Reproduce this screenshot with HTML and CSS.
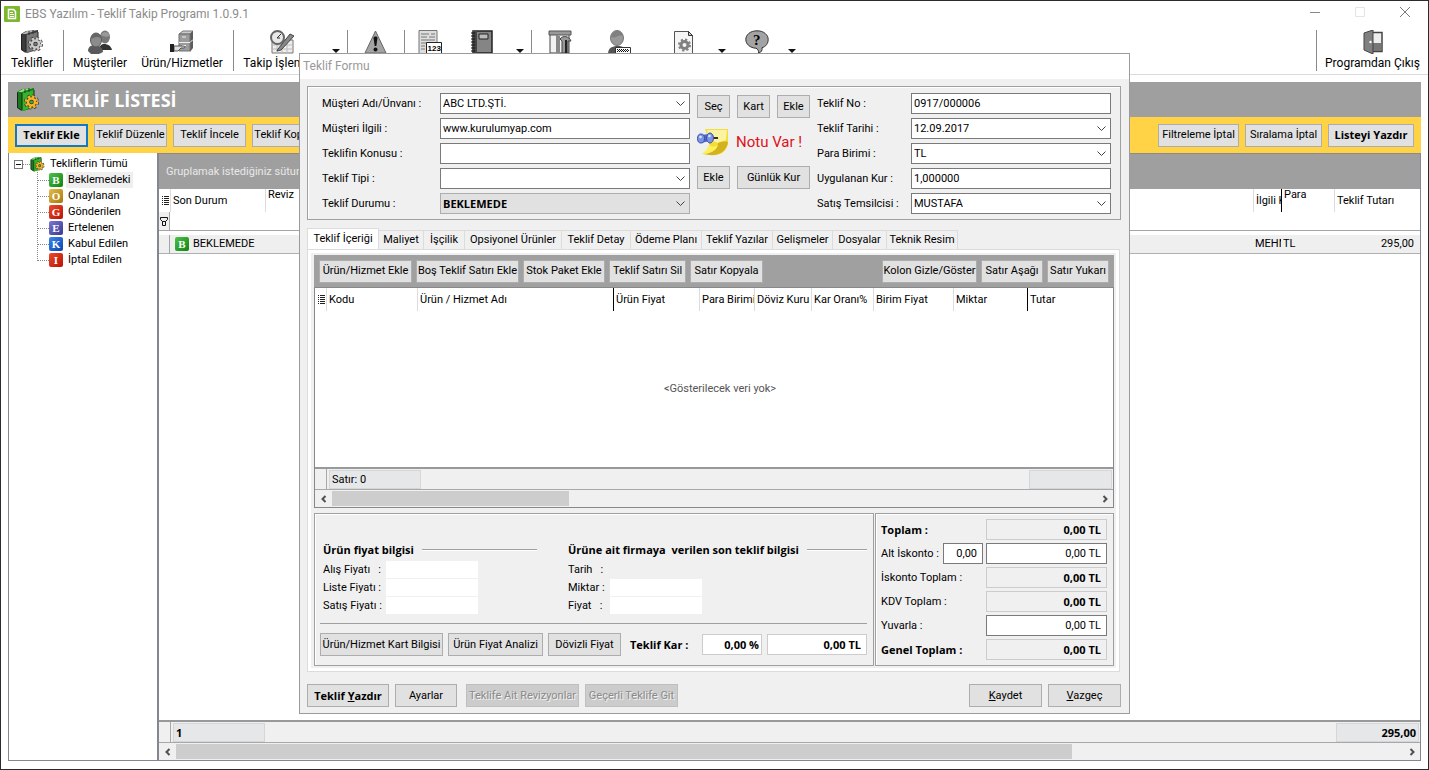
FILE: index.html
```html
<!DOCTYPE html>
<html lang="tr">
<head>
  <meta charset="UTF-8">
  <meta name="viewport" content="width=device-width, initial-scale=1.0">
  <title>EBS Yazılım - Teklif Takip Programı 1.0.9.1</title>
  <link rel="stylesheet" href="styles.css">
</head>
<body>

<!-- shared icons -->
<svg class="sprite" aria-hidden="true">
  <symbol id="i-book" viewBox="0 0 24 24">
    <path d="M1 4 6 1l12-1v3l-1 17-10 3-6-3z" fill="var(--book-dark)"/>
    <path d="M6 5l12-3v17L6 23z" fill="var(--book)"/>
    <path d="M2 4l5-3 10-1-11 4z" fill="var(--book-light)"/>
    <path d="M1.500 4.500v15l4 3M6 5v17M18 2v5" fill="none" stroke="#222"/>
    <path d="M9 1v4M13 0v4" stroke="#333"/>
    <circle cx="15.500" cy="14" r="5.500" fill="none" stroke="#333" stroke-width="4" stroke-dasharray="2.300 2"/>
    <circle cx="15.500" cy="14" r="3.500" fill="none" stroke="#333" stroke-width="4"/>
    <circle cx="15.500" cy="14" r="5.500" fill="none" stroke="var(--cog)" stroke-width="2.500" stroke-dasharray="2.300 2"/>
    <circle cx="15.500" cy="14" r="3.500" fill="none" stroke="var(--cog)" stroke-width="2.500"/>
  </symbol>
  <symbol id="i-arrow-left" viewBox="0 0 8 8">
    <path d="M5.500 1 2.500 4l3 3" fill="none" stroke="#505050" stroke-width="2"/>
  </symbol>
  <symbol id="i-arrow-right" viewBox="0 0 8 8">
    <path d="M2.500 1l3 3-3 3" fill="none" stroke="#505050" stroke-width="2"/>
  </symbol>
  <symbol id="i-lines" viewBox="0 0 7 9">
    <path d="M0 .5h1M2 .5h5M0 2.500h1M2 2.500h5M0 4.500h1M2 4.500h5M0 6.500h1M2 6.500h5M0 8.500h1M2 8.500h5" stroke="#222"/>
  </symbol>
</svg>

<div class="window">
  <header class="titlebar">
    <svg class="app-icon" viewBox="0 0 16 16"><rect width="16" height="16" rx="1" fill="#7cb82f"/><path d="M4.500 3.500h5l2 2v7h-7z" fill="none" stroke="#fff" stroke-width="1.500"/><path d="M6 6.500h3M6 8.500h4M6 10.500h4" stroke="#fff"/></svg>
    <h1>EBS Yazılım - Teklif Takip Programı 1.0.9.1</h1>
    <div class="window-buttons">
      <button aria-label="Simge durumuna küçült"><svg viewBox="0 0 12 12"><path d="M1 6.500h10" stroke="#888"/></svg></button>
      <button aria-label="Ekranı kapla"><svg viewBox="0 0 12 12"><path d="M1.500 1.500h9v9h-9z" fill="none" stroke="#e4e4e4"/></svg></button>
      <button aria-label="Kapat"><svg viewBox="0 0 12 12"><path d="M1 1l10 10M11 1 1 11" stroke="#777"/></svg></button>
    </div>
  </header>

  <nav class="toolbar">
    <button class="tool tool-62"><svg class="icon book-gray"><use href="#i-book"/></svg>Teklifler</button>
    <span class="sep"></span>
    <button class="tool tool-72">
      <svg class="icon" viewBox="0 0 24 24"><path d="M11 19c0-3 3-5 5-5 4 0 7 2 8 6H12z" fill="#333"/><ellipse cx="17" cy="7" rx="5" ry="6.500" fill="#777"/><path d="M13 5c2-4 7-4 9 1-3 1-6 1-9-1z" fill="#999"/><path d="M0 21c0-4 3-6 7-6s8 3 8 7l-4 2H3z" fill="#5a5a5a"/><ellipse cx="8" cy="10" rx="5.500" ry="7" fill="#8c8c8c" stroke="#5b5b5b"/><path d="M3 9c1-8 10-7 11 0-4-3-7-2-11 0z" fill="#666"/></svg>
      Müşteriler
    </button>
    <button class="tool tool-92">
      <svg class="icon" viewBox="0 0 24 24"><path d="M9 4l4-3h10l-3 3z" fill="#ccc" stroke="#777"/><path d="M20 4l3-3v17l-3 4z" fill="#5c5c5c"/><path d="M9 4h11v17H9z" fill="#9b9b9b" stroke="#707070"/><path d="M9 12.500h11l3-3M12 7h4M12 15.500h4" fill="none" stroke="#eee"/><path d="M4 16h8c3 0 4 1 2 2h-3l-3 3H4z" fill="#ddd" stroke="#555"/><path d="M0 14h4v8H0z" fill="#222"/></svg>
      Ürün/Hizmetler
    </button>
    <span class="sep sep-gap"></span>
    <button class="tool tool-96">
      <svg class="icon" viewBox="0 0 24 24"><path d="M2 10h21v13H2z" fill="#eee" stroke="#777"/><path d="M3 15h20M3 19h20M7 12v11M12 12v11M17 12v11" stroke="#bbb"/><circle cx="7.500" cy="7.500" r="6.500" fill="#e8e8e8" stroke="#666" stroke-width="2"/><path d="M11 4 7 8h3" fill="none" stroke="#333"/><path d="M8 19 20 4l4 2-13 14-4 1z" fill="#888" stroke="#444"/></svg>
      Takip İşlemleri
    </button>
    <button class="drop" aria-label="Takip menüsü"></button>
    <span class="sep sep-gap"></span>
    <button class="tool tool-56" aria-label="Uyarılar">
      <svg class="icon" viewBox="0 0 24 24"><path d="M11.500 1 22 23H1z" fill="#a3a3a3" stroke="#666"/><path d="M9.500 8c0-2 4-2 4 0l-1.200 8h-1.600z" fill="#111"/><circle cx="11.500" cy="19.500" r="2" fill="#111"/></svg>
    </button>
    <span class="sep"></span>
    <button class="tool tool-50" aria-label="Numaratör">
      <svg class="icon" viewBox="0 0 24 24"><path d="M1 .5h18v23H1z" fill="#ddd" stroke="#777"/><path d="M3 4h8M13 4h4M3 7h6M11 7h6M3 10h14M3 13h5M3 16h4M3 19h4" stroke="#777"/><path d="M8.500 12.500h15v11h-15z" fill="#fff" stroke="#222"/><text x="9.500" y="21" font-size="8" font-weight="bold" font-family="Liberation Sans, sans-serif">123</text></svg>
    </button>
    <button class="tool tool-54" aria-label="Rehber">
      <svg class="icon" viewBox="0 0 24 24"><path d="M3 1h19v22H3z" fill="#858585" stroke="#222" stroke-width="1.500"/><path d="M3 1h4v22H3z" fill="#444"/><path d="M1 3h4M1 6h4M1 9h4M1 12h4M1 15h4M1 18h4M1 21h4" stroke="#111"/><path d="M9 4h9v5H9z" fill="#bbb" stroke="#222"/></svg>
    </button>
    <button class="drop drop-gap" aria-label="Rehber menüsü"></button>
    <span class="sep sep-gap"></span>
    <button class="tool tool-56" aria-label="Araçlar">
      <svg class="icon" viewBox="0 0 24 24"><path d="M2 4h19v19H2z" fill="#f2f2f2" stroke="#444"/><path d="M1 1h22v4H1z" fill="#999" stroke="#555"/><path d="M9 5v18M11 6v17" stroke="#888" stroke-width="2"/><path d="M12 9c3-4 9-3 11 2h-3v12h-6V11z" fill="#999" stroke="#444"/><path d="M18 10v13" stroke="#222" stroke-width="2"/></svg>
    </button>
    <button class="tool tool-62" aria-label="Kullanıcılar">
      <svg class="icon" viewBox="0 0 24 24"><path d="M1 24c0-6 4-8 10-8 5 0 9 2 9 8z" fill="#555"/><ellipse cx="10" cy="8" rx="6.500" ry="7.500" fill="#999" stroke="#777"/><path d="M4 7c2-8 11-8 12-1-5-2-7 3-12 1z" fill="#808080"/><path d="M8.500 17.500h15v6h-15z" fill="#fff" stroke="#333"/><path d="M10 19.500h12M11 20.500h12M10 21.500h12" stroke="#111" stroke-dasharray="1 1"/></svg>
    </button>
    <button class="tool tool-66" aria-label="Ayar dosyası">
      <svg class="icon" viewBox="0 0 24 24"><path d="M3.500 1.500h14l4 4v18h-18z" fill="#f5f5f5" stroke="#555"/><path d="M17.500 1.500v4h4z" fill="#ccc" stroke="#333"/><circle cx="13.500" cy="15" r="3.500" fill="none" stroke="#808080" stroke-width="3"/><circle cx="13.500" cy="15" r="5.500" fill="none" stroke="#808080" stroke-width="2" stroke-dasharray="2.200 2.100"/></svg>
    </button>
    <button class="drop" aria-label="Ayar menüsü"></button>
    <button class="tool tool-58" aria-label="Yardım">
      <svg class="icon" viewBox="0 0 24 24"><path d="M12 .8C5 .8.800 5 .8 9.500S5 18 11 18.200c2 1 3 3 2.500 5 3-1 4-3 3.500-5.500 4-1 6.200-4.500 6.200-8.200C23.200 5 19 .8 12 .8z" fill="#a3a3a3" stroke="#333"/><text x="8" y="15" font-size="15" font-weight="bold" font-family="Liberation Serif, serif">?</text></svg>
    </button>
    <button class="drop" aria-label="Yardım menüsü"></button>
    <span class="sep sep-end"></span>
    <button class="tool tool-exit">
      <svg class="icon" viewBox="0 0 24 24"><path d="M10 2.500h11v19H10z" fill="#eee" stroke="#444" stroke-width="1.500"/><path d="M11 13h9v8h-9z" fill="#777"/><path d="M3 3l9-3v24l-9-4z" fill="#808080" stroke="#444"/><circle cx="9.500" cy="12" r="1.200" fill="#fff"/></svg>
      Programdan Çıkış
    </button>
  </nav>

  <main class="workspace">
    <div class="page-head">
      <svg class="icon book-green"><use href="#i-book"/></svg>
      <h2>TEKLİF LİSTESİ</h2>
    </div>

    <div class="action-bar">
      <button class="btn btn-default">Teklif Ekle</button>
      <button class="btn">Teklif Düzenle</button>
      <button class="btn">Teklif İncele</button>
      <button class="btn">Teklif Kopyala</button>
      <button class="btn push">Filtreleme İptal</button>
      <button class="btn w-76">Sıralama İptal</button>
      <button class="btn strong">Listeyi Yazdır</button>
    </div>

    <div class="split">
      <aside class="tree">
        <div class="tree-root">
          <button class="expander" aria-label="Daralt"></button>
          <span class="dots"></span>
          <svg class="icon-sm book-green"><use href="#i-book"/></svg>
          <a href="#">Tekliflerin Tümü</a>
        </div>
        <ul>
          <li><span class="badge green">B</span><a href="#" class="selected">Beklemedeki</a></li>
          <li><span class="badge gold">O</span><a href="#">Onaylanan</a></li>
          <li><span class="badge red">G</span><a href="#">Gönderilen</a></li>
          <li><span class="badge violet">E</span><a href="#">Ertelenen</a></li>
          <li><span class="badge blue">K</span><a href="#">Kabul Edilen</a></li>
          <li><span class="badge red">I</span><a href="#">İptal Edilen</a></li>
        </ul>
      </aside>

      <section class="list">
        <div class="group-box">Gruplamak istediğiniz sütunu</div>
        <table class="offers">
          <colgroup><col class="c-mark"><col class="c-state"><col><col class="c-contact"><col class="c-cur"><col class="c-total"></colgroup>
          <thead>
            <tr>
              <th><svg class="mark"><use href="#i-lines"/></svg></th>
              <th>Son Durum</th>
              <th class="top">Reviz</th>
              <th>İlgili K</th>
              <th class="top fixed">Para</th>
              <th>Teklif Tutarı</th>
            </tr>
          </thead>
          <tbody>
            <tr class="filter">
              <td><svg class="funnel" viewBox="0 0 8 9"><path d="M.5.5h7v2l-2 2h-3l-2-2zM2.500 4.500h3v4h-3z" fill="none" stroke="#111"/></svg></td>
              <td></td><td></td><td></td><td class="fixed"></td><td></td>
            </tr>
            <tr class="spacer"><td colspan="6"></td></tr>
            <tr class="offer">
              <td></td>
              <td><span class="badge green">B</span>BEKLEMEDE</td>
              <td></td>
              <td>MEHM</td>
              <td class="fixed">TL</td>
              <td class="num">295,00</td>
            </tr>
          </tbody>
        </table>
        <div class="summary">
          <span class="summary-mark"></span>
          <span class="summary-cell strong">1</span>
          <span class="summary-cell strong end sum-total">295,00</span>
        </div>
        <div class="scrollbar">
          <button aria-label="Sola kaydır"><svg><use href="#i-arrow-left"/></svg></button>
          <span class="track"><span class="thumb thumb-list"></span></span>
          <button aria-label="Sağa kaydır"><svg><use href="#i-arrow-right"/></svg></button>
        </div>
      </section>
    </div>
  </main>

  <div class="dialog" role="dialog" aria-labelledby="dialog-title">
    <h2 class="dialog-title" id="dialog-title">Teklif Formu</h2>

    <div class="dialog-body">
      <div class="panel offer-form">
        <div class="fields">
          <label for="customer">Müşteri Adı/Ünvanı :</label>
          <select id="customer"><option>ABC LTD.ŞTİ.</option></select>
          <label for="contact">Müşteri İlgili :</label>
          <input type="text" id="contact" value="www.kurulumyap.com">
          <label for="subject">Teklifin Konusu :</label>
          <input type="text" id="subject">
          <label for="type">Teklif Tipi :</label>
          <select id="type"><option></option></select>
          <label for="state">Teklif Durumu :</label>
          <select id="state" class="state strong"><option>BEKLEMEDE</option></select>
        </div>

        <div class="side-actions">
          <button class="btn">Seç</button>
          <button class="btn">Kart</button>
          <button class="btn">Ekle</button>
          <div class="note">
            <svg viewBox="0 0 32 28"><path d="M8 1h23v13c0 8-7 14-15 13l-11-1c6-3 8-9 7-14z" fill="#f3dd3a"/><path d="M10 2h20l-1 10-8 3-9-4z" fill="#fbf3a0"/><path d="M31 14c-4-1-8 0-10 1 0 5-5 10-14 11 14 4 23-3 24-12z" fill="#d3b31d"/><path d="M4 26c4-2 7-5 8-10 1 3 5 4 9 1-2 6-8 9-17 9z" fill="#ffef5d"/><path d="M14 10h7" stroke="#334" stroke-width="2"/><path d="M4 7l8-1 3 3-2 4-9 2z" fill="#5069c8"/><ellipse cx="4" cy="10.500" rx="3.500" ry="4.500" fill="#7b94e4" stroke="#3b4da8"/><ellipse cx="13" cy="10" rx="3.500" ry="5" fill="#7b94e4" stroke="#3b4da8"/><circle cx="3.500" cy="9" r="1.300" fill="#dfe6ff"/><circle cx="12.500" cy="8" r="1.300" fill="#dfe6ff"/></svg>
            Notu Var !
          </div>
          <button class="btn">Ekle</button>
          <button class="btn wide">Günlük Kur</button>
        </div>

        <div class="fields fields-right">
          <label for="no">Teklif No :</label>
          <input type="text" id="no" value="0917/000006">
          <label for="date">Teklif Tarihi :</label>
          <select id="date"><option>12.09.2017</option></select>
          <label for="currency">Para Birimi :</label>
          <select id="currency"><option>TL</option></select>
          <label for="rate">Uygulanan Kur :</label>
          <input type="text" id="rate" value="1,000000">
          <label for="agent">Satış Temsilcisi :</label>
          <select id="agent"><option>MUSTAFA</option></select>
        </div>
      </div>

      <div class="tabs" role="tablist">
        <button class="tab active" role="tab">Teklif İçeriği</button>
        <button class="tab" role="tab">Maliyet</button>
        <button class="tab" role="tab">İşçilik</button>
        <button class="tab" role="tab">Opsiyonel Ürünler</button>
        <button class="tab" role="tab">Teklif Detay</button>
        <button class="tab" role="tab">Ödeme Planı</button>
        <button class="tab" role="tab">Teklif Yazılar</button>
        <button class="tab" role="tab">Gelişmeler</button>
        <button class="tab" role="tab">Dosyalar</button>
        <button class="tab" role="tab">Teknik Resim</button>
      </div>

      <div class="tab-page">
        <div class="row-actions">
          <button class="btn w-92">Ürün/Hizmet Ekle</button>
          <button class="btn w-102">Boş Teklif Satırı Ekle</button>
          <button class="btn w-82">Stok Paket Ekle</button>
          <button class="btn w-76">Teklif Satırı Sil</button>
          <button class="btn w-73">Satır Kopyala</button>
          <button class="btn w-95 push">Kolon Gizle/Göster</button>
          <button class="btn w-62">Satır Aşağı</button>
          <button class="btn w-62">Satır Yukarı</button>
        </div>

        <div class="lines">
          <table>
            <colgroup><col class="c-mark"><col class="c-code"><col><col class="c-price"><col class="c-55"><col class="c-57"><col class="c-62"><col class="c-80"><col class="c-74"><col class="c-price"></colgroup>
            <thead>
              <tr>
                <th><svg class="mark"><use href="#i-lines"/></svg></th>
                <th>Kodu</th>
                <th>Ürün / Hizmet Adı</th>
                <th class="fixed">Ürün Fiyat</th>
                <th>Para Birimi</th>
                <th>Döviz Kuru</th>
                <th>Kar Oranı%</th>
                <th>Birim Fiyat</th>
                <th>Miktar</th>
                <th class="fixed">Tutar</th>
              </tr>
            </thead>
          </table>
          <p class="empty">&lt;Gösterilecek veri yok&gt;</p>
          <div class="summary">
            <span class="summary-mark"></span>
            <span class="summary-cell">Satır: 0</span>
            <span class="summary-cell end"></span>
          </div>
          <div class="scrollbar">
            <button aria-label="Sola kaydır"><svg><use href="#i-arrow-left"/></svg></button>
            <span class="track"><span class="thumb thumb-lines"></span></span>
            <button aria-label="Sağa kaydır"><svg><use href="#i-arrow-right"/></svg></button>
          </div>
        </div>

        <div class="details">
          <div class="panel info">
            <div class="info-cols">
              <div class="info-block">
                <h3>Ürün fiyat bilgisi</h3>
                <div class="info-grid">
                  <label for="buy">Alış Fiyatı &nbsp;&nbsp;:</label><input id="buy" type="text" readonly>
                  <label for="listp">Liste Fiyatı :</label><input id="listp" type="text" readonly>
                  <label for="sell">Satış Fiyatı :</label><input id="sell" type="text" readonly>
                </div>
              </div>
              <div class="info-block info-last">
                <h3>Ürüne ait firmaya &nbsp;verilen son teklif bilgisi</h3>
                <div class="info-grid narrow">
                  <span>Tarih &nbsp;&nbsp;:</span><span></span>
                  <label for="qty">Miktar :</label><input id="qty" type="text" readonly>
                  <label for="price">Fiyat &nbsp;&nbsp;:</label><input id="price" type="text" readonly>
                </div>
              </div>
            </div>
            <div class="info-actions">
              <button class="btn w-123">Ürün/Hizmet Kart Bilgisi</button>
              <button class="btn w-95">Ürün Fiyat Analizi</button>
              <button class="btn w-73">Dövizli Fiyat</button>
              <label for="profit" class="strong">Teklif Kar :</label>
              <input id="profit" class="soft strong num percent" type="text" value="0,00 %">
              <input class="soft strong num amount" type="text" value="0,00 TL" aria-label="Teklif kar tutarı">
            </div>
          </div>

          <div class="panel totals">
            <label for="total" class="strong">Toplam :</label>
            <input id="total" class="soft locked strong num" value="0,00 TL" readonly>
            <span class="with-rate"><label for="disc">Alt İskonto :</label><input class="num rate" value="0,00" aria-label="Alt iskonto oranı"></span>
            <input id="disc" class="num" value="0,00 TL">
            <label for="disctotal">İskonto Toplam :</label>
            <input id="disctotal" class="soft locked strong num" value="0,00 TL" readonly>
            <label for="vat">KDV Toplam :</label>
            <input id="vat" class="soft locked strong num" value="0,00 TL" readonly>
            <label for="round">Yuvarla :</label>
            <input id="round" class="num" value="0,00 TL">
            <label for="grand" class="strong">Genel Toplam :</label>
            <input id="grand" class="soft locked strong num" value="0,00 TL" readonly>
          </div>
        </div>
      </div>

      <div class="dialog-actions">
        <button class="btn strong w-82">Teklif <u>Y</u>azdır</button>
        <button class="btn w-62">Ayarlar</button>
        <button class="btn w-113 revisions" disabled>Teklife Ait Revizyonlar</button>
        <button class="btn w-92" disabled>Geçerli Teklife Git</button>
        <button class="btn w-73 push"><u>K</u>aydet</button>
        <button class="btn w-73"><u>V</u>azgeç</button>
      </div>
    </div>
  </div>
</div>

</body>
</html>
```
FILE: styles.css
```css
* { box-sizing: border-box; }
body { margin: 0; font-family: Roboto, "Liberation Sans", sans-serif; font-size: 11px; line-height: 14px; color: #000; background: #fff; }
h1, h2, h3, p, ul { margin: 0; padding: 0; }
button, input, select { font: inherit; color: inherit; margin: 0; padding: 0; border-radius: 0; }
button { background: none; border: 0; white-space: nowrap; }
a { color: inherit; text-decoration: none; }
table { width: 100%; table-layout: fixed; border-collapse: separate; border-spacing: 0; }
.sprite { display: none; }
.strong { font-family: "Open Sans", sans-serif; font-weight: bold; }
.push { margin-left: auto !important; }
.num { text-align: right; }
.icon { width: 24px; height: 24px; flex: none; }
.icon-sm { width: 15px; height: 15px; flex: none; }
.book-gray { --book: #777; --book-dark: #3c3c3c; --book-light: #b5b5b5; --cog: #c8c8c8; }
.book-green { --book: #35b52a; --book-dark: #157a18; --book-light: #8be57c; --cog: #f9b32a; }

/* main window */
.window { position: relative; display: flex; flex-direction: column; height: 100vh; min-height: 770px; border: 1px solid #2b2b2f; }
.titlebar { display: flex; align-items: center; height: 25px; padding-left: 3px; color: #8c8c8c; }
.titlebar h1 { margin-left: 5px; font-size: 12px; font-weight: normal; }
.app-icon { width: 16px; height: 16px; }
.window-buttons { display: flex; margin-left: auto; margin-right: 1px; }
.window-buttons button { width: 45px; height: 25px; }
.window-buttons svg { width: 12px; height: 12px; }

.toolbar { display: flex; height: 49px; padding-top: 4px; border-bottom: 1px solid #dcdcdc; font-size: 12px; }
.tool { display: flex; flex-direction: column; align-items: center; justify-content: flex-start; gap: 2px; height: 42px; }
.tool-50 { width: 50px; }
.tool-54 { width: 54px; }
.tool-56 { width: 56px; }
.tool-58 { width: 58px; }
.tool-62 { width: 62px; }
.tool-66 { width: 66px; }
.tool-72 { width: 72px; }
.tool-92 { width: 92px; }
.tool-96 { width: 96px; }
.tool-exit { width: 111px; }
.sep { width: 1px; height: 41px; background: #8a8a8a; }
.sep-gap { margin-left: 5px; }
.sep-end { margin-left: auto; }
.drop { width: 12px; height: 42px; }
.drop-gap { margin-left: 5px; }
.drop::before { content: ""; display: block; margin: 0 2px; border: 4px solid transparent; border-top-color: #111; border-bottom: 0; }

.workspace { display: flex; flex-direction: column; flex: 1; margin: 7px 7px 8px; }
.page-head { display: flex; align-items: center; gap: 11px; height: 35px; padding-left: 8px; background: #9f9f9f; color: #fff; }
.page-head h2 { font: bold 18px "Open Sans", sans-serif; }
.action-bar { display: flex; align-items: center; gap: 6px; height: 36px; padding: 0 7px; background: #ffd345; }
.action-bar .btn { min-width: 73px; padding: 0 1px; }
.action-bar .push { min-width: 81px; }
.action-bar .strong { min-width: 86px; }

.btn { height: 23px; padding: 0; border: 1px solid #adadad; background: #e1e1e1; text-align: center; }
.btn-default { border: 2px solid #1378c6; font-family: "Open Sans", sans-serif; font-weight: bold; }
.btn:disabled { border-color: #bfbfbf; background: #ccc; color: #8a8a8a; text-shadow: 1px 1px #f4f4f4; }
.w-62 { width: 62px; }
.w-73 { width: 73px; }
.w-76 { width: 77px; }
.w-82 { width: 82px; }
.w-92 { width: 93px; }
.w-95 { width: 95px; }
.w-102 { width: 103px; }
.w-113 { width: 113px; }
.w-123 { width: 123px; }

.split { display: flex; flex: 1; border: 1px solid #828790; border-top: 0; }
.tree { width: 150px; border-right: 2px solid #828790; padding: 3px 0 0 5px; }
.tree-root { display: flex; align-items: center; height: 16px; }
.expander { display: flex; align-items: center; justify-content: center; width: 9px; height: 9px; border: 1px solid #777; }
.expander::before { content: ""; width: 5px; height: 1px; background: #111; }
.dots { width: 7px; border-top: 1px dotted #888; }
.tree-root a { padding-left: 5px; }
.tree ul { margin-left: 23px; list-style: none; background: repeating-linear-gradient(#888 0 1px, #fff 1px 2px) no-repeat 0 0 / 1px calc(100% - 8px); }
.tree li { display: flex; align-items: center; height: 16px; }
.tree li::before { content: ""; width: 12px; border-top: 1px dotted #888; }
.tree li a { margin-left: 3px; padding: 1px 2px; }
.tree .selected { background: #efefef; }
.badge { display: inline-flex; align-items: center; justify-content: center; width: 14px; height: 14px; border-radius: 2px; color: #fff; font: bold 11px "Liberation Serif", serif; }
.green { background: linear-gradient(135deg, #4fc04a, #0f8412); }
.gold { background: linear-gradient(135deg, #e3bd4a, #a87808); }
.red { background: linear-gradient(135deg, #ee4a2c, #b81206); }
.violet { background: linear-gradient(135deg, #7a78d0, #3a3796); }
.blue { background: linear-gradient(135deg, #3b86ea, #0a46b0); }

.list { display: flex; flex-direction: column; flex: 1; min-width: 0; }
.group-box { display: flex; align-items: center; height: 36px; padding-left: 7px; background: #9f9f9f; color: #e8e8e8; border-top: 1px solid #8b8b8b; }
th, td { overflow: hidden; padding: 0 0 0 2px; border-left: 1px solid #dcdcdc; font-weight: normal; text-align: left; white-space: nowrap; }
th { height: 23px; }
th:first-child, td:first-child { padding: 0 1px; border-left: 0; }
.mark { display: block; width: 7px; height: 9px; margin-left: 2px; }
.funnel { display: block; width: 8px; height: 9px; }
.top { vertical-align: top; line-height: 12px; }
.fixed, tr .fixed { border-left: 1px solid #000; }
.c-mark { width: 11px; }
.c-state { width: 95px; }
.c-contact { width: 28px; }
.c-cur { width: 53px; }
.c-total { width: 86px; }
.c-code { width: 91px; }
.c-price { width: 86px; }
.c-55 { width: 55px; }
.c-57 { width: 57px; }
.c-62 { width: 62px; }
.c-80 { width: 80px; }
.c-74 { width: 74px; }
.filter td { height: 19px; border-left-width: 0; border-bottom: 1px solid #a5a5a5; }
.filter td:first-child, .offer td:first-child { background: #efefef; border-right: 1px solid #a5a5a5; }
.spacer td { height: 4px; border: 0; }
.offer td { height: 19px; background: #efefef; border-left-width: 0; border-bottom: 1px solid #b0b0b0; }
.offer .badge { margin-right: 4px; vertical-align: middle; }
.offer .num { padding-right: 6px; }
.offer td:nth-child(2) { padding-left: 5px; }

.summary { display: flex; align-items: center; height: 23px; margin-top: auto; border-top: 2px solid #999; border-bottom: 1px solid #a8a8a8; background: #f0f0f0; }
.summary-mark { width: 12px; height: 100%; border-right: 1px solid #a8a8a8; }
.summary-cell { width: 92px; height: 19px; margin-left: 2px; padding: 2px; border: 1px solid #d4d6d8; background: #e6e7e9; }
.summary .end { width: 83px; margin-left: auto; margin-right: 1px; text-align: right; }
.scrollbar { display: flex; height: 17px; background: #f0f0f0; }
.scrollbar button { display: flex; align-items: center; justify-content: center; width: 17px; }
.scrollbar svg { width: 8px; height: 8px; }
.track { flex: 1; padding: 1px 0; }
.thumb { display: block; height: 15px; background: #cdcdcd; }
.thumb-list { width: 73%; }
.thumb-lines { width: 31%; }

/* offer dialog, floats over the list */
.dialog { position: absolute; top: 52px; left: 298px; right: 298px; border: 1px solid #9b9b9b; background: #f0f0f0; }
.dialog-title { height: 25px; padding: 5px 3px; background: #fff; color: #999; font-size: 12px; font-weight: normal; line-height: 15px; }
.dialog-body { padding: 7px 8px 6px 7px; }
.panel { border: 1px solid #a0a0a0; box-shadow: inset 1px 1px #fff; }
.offer-form { display: flex; gap: 7px; padding: 6px 9px 5px 14px; }
.fields { display: grid; flex: 1; grid-template-columns: 118px 1fr; grid-auto-rows: 21px; row-gap: 4px; align-items: center; }
.fields-right { grid-template-columns: 94px 1fr; flex: 0 0 294px; }
input, select { width: 100%; min-width: 0; height: 21px; padding: 0 2px; border: 1px solid #7a7a7a; background: #fff; }
select { appearance: none; background: #fff url("data:image/svg+xml,%3Csvg xmlns='http://www.w3.org/2000/svg' width='9' height='6'%3E%3Cpath d='M.5.5l4 4 4-4' fill='none' stroke='%23444'/%3E%3C/svg%3E") no-repeat right 4px center; }
.state { border-color: #adadad; background-color: #e1e1e1; }
.side-actions { display: grid; grid-template-columns: 33px 33px 33px; column-gap: 7px; align-content: start; grid-template-rows: 23px 48px 23px; padding-top: 2px; width: 113px; }
.note { display: flex; grid-column: 1 / 4; align-items: center; gap: 7px; color: #e01020; font-size: 15px; white-space: nowrap; }
.note svg { width: 32px; height: 28px; }
.wide { grid-column: 2 / 4; }

.tabs { display: grid; grid-template-columns: 72px 45px 41px 97px 69px 71px 71px 60px 54px 71px; align-items: end; height: 21px; margin-top: 8px; }
.tab { height: 19px; border: 1px solid #dcdcdc; border-left: 0; border-bottom: 0; }
.tab.active { height: 21px; border-left: 1px solid #dcdcdc; background: #fff; }
.tab-page { margin-right: 1px; padding: 5px 5px 5px 6px; border: 1px solid #dcdcdc; outline: 3px solid #fff; outline-offset: -4px; }
.row-actions { display: flex; align-items: center; gap: 4px; height: 32px; padding: 0 5px; background: #a0a0a0; }
.lines { display: flex; flex-direction: column; height: 221px; border: 1px solid #888; background: #fff; }
.empty { margin: auto; padding-left: 12px; color: #555; }
.lines .summary { margin-top: 0; }

.details { display: flex; gap: 1px; margin-top: 5px; }
.info { flex: 1; padding: 28px 6px 8px 5px; }
.info-cols { display: flex; gap: 31px; padding-left: 3px; }
.info-block { width: 214px; }
.info-last { flex: 1; }
.info-block h3 { display: flex; align-items: center; gap: 8px; font: bold 11px/15px "Open Sans", sans-serif; white-space: nowrap; }
.info-block h3::after { content: ""; flex: 1; border-top: 1px solid #a0a0a0; border-bottom: 1px solid #fff; }
.info-grid { display: grid; grid-template-columns: 63px 92px; grid-auto-rows: 17px; row-gap: 1px; margin-top: 4px; align-items: center; }
.info-grid input { height: 17px; border: 0; }
.narrow { grid-template-columns: 42px 92px; }
.info-actions { display: flex; align-items: center; margin-top: 9px; padding-top: 9px; border-top: 1px solid #a0a0a0; gap: 5px; }
.info-actions label { margin: 0 auto 0 4px; }
.soft { border-color: #ccc; }
.locked { background: #f0f0f0; }
.info-actions .percent { width: 60px; }
.info-actions .amount { width: 100px; padding-right: 5px; }
.totals { display: grid; flex: 0 0 239px; grid-template-columns: 105px 1fr; grid-auto-rows: 21px; row-gap: 3px; align-items: center; padding: 5px 6px 5px 5px; }
.totals input { padding-right: 5px; }
.with-rate { display: flex; align-items: center; justify-content: space-between; padding-right: 3px; }
.totals .rate { width: 40px; }
.dialog-actions { display: flex; gap: 6px; margin-top: 12px; }
.revisions { margin-left: 3px; }
```
